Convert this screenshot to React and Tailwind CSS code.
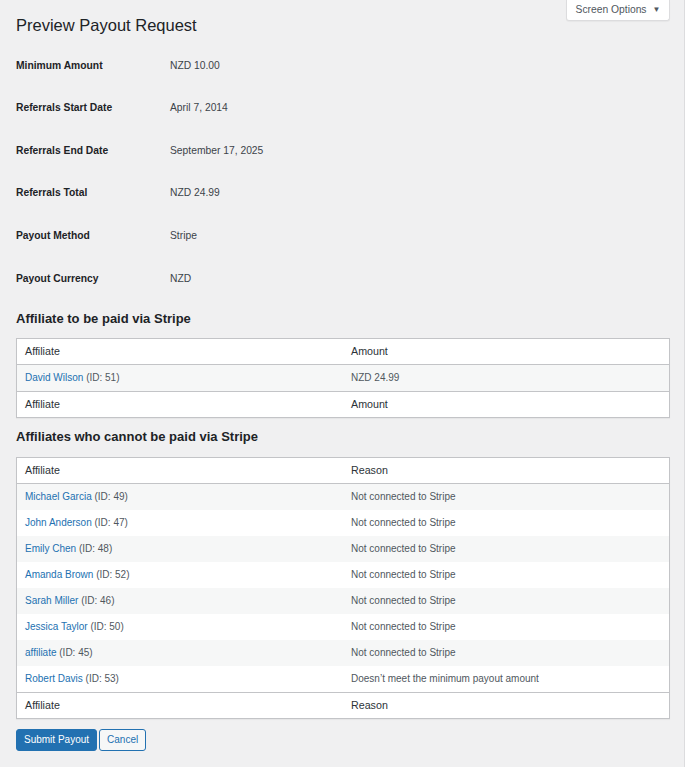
import React from 'react';

const summary = [
  { label: 'Minimum Amount', value: 'NZD 10.00' },
  { label: 'Referrals Start Date', value: 'April 7, 2014' },
  { label: 'Referrals End Date', value: 'September 17, 2025' },
  { label: 'Referrals Total', value: 'NZD 24.99' },
  { label: 'Payout Method', value: 'Stripe' },
  { label: 'Payout Currency', value: 'NZD' },
];

const payable = [{ name: 'David Wilson', id: 51, amount: 'NZD 24.99' }];

const unpayable = [
  { name: 'Michael Garcia', id: 49, reason: 'Not connected to Stripe' },
  { name: 'John Anderson', id: 47, reason: 'Not connected to Stripe' },
  { name: 'Emily Chen', id: 48, reason: 'Not connected to Stripe' },
  { name: 'Amanda Brown', id: 52, reason: 'Not connected to Stripe' },
  { name: 'Sarah Miller', id: 46, reason: 'Not connected to Stripe' },
  { name: 'Jessica Taylor', id: 50, reason: 'Not connected to Stripe' },
  { name: 'affiliate', id: 45, reason: 'Not connected to Stripe' },
  { name: 'Robert Davis', id: 53, reason: 'Doesn\u2019t meet the minimum payout amount' },
];

const HeadRow = ({ cols, top }) => (
  <div
    className={`grid grid-cols-2 h-[26px] items-center text-[10.7px] text-[#2c3338] bg-white ${
      top ? 'border-b' : 'border-t'
    } border-[#c3c4c7]`}
  >
    {cols.map((c) => (
      <div key={c} className="px-2">{c}</div>
    ))}
  </div>
);

const AffiliateTable = ({ cols, rows }) => (
  <div className="border border-[#c3c4c7] bg-white shadow-[0_1px_1px_rgba(0,0,0,0.04)]">
    <HeadRow cols={cols} top />
    {rows.map((r, i) => (
      <div
        key={r.id}
        className={`grid grid-cols-2 h-[26px] items-center text-[10px] text-[#50575e] ${
          i % 2 === 0 ? 'bg-[#f6f7f7]' : 'bg-white'
        }`}
      >
        <div className="px-2">
          <a href="#" className="text-[#2271b1]">{r.name}</a> (ID: {r.id})
        </div>
        <div className="px-2">{r.amount || r.reason}</div>
      </div>
    ))}
    <HeadRow cols={cols} />
  </div>
);

export default function App() {
  return (
    <div
      className="min-h-screen bg-[#f0f0f1] border-r border-[#dcdcde] text-[#3c434a]"
      style={{ fontFamily: '"Liberation Sans", Arial, sans-serif' }}
    >
      <div className="pl-4 pr-[14px]">
        <div className="flex items-start justify-between">
          <h1 className="pt-[14px] text-[16.5px] leading-[22px] text-[#1d2327]">Preview Payout Request</h1>
          <button className="h-[21px] w-[104px] bg-white border border-[#dcdcde] border-t-0 rounded-b-[3px] text-[10.3px] text-[#50575e] flex items-center justify-center gap-[6px] shadow-[0_1px_1px_rgba(0,0,0,0.04)]">
            Screen Options <span className="text-[8px]">▼</span>
          </button>
        </div>

        <div className="mt-[8px]">
          {summary.map((s) => (
            <div key={s.label} className="flex items-center h-[42.6px] text-[10.3px]">
              <div className="w-[154px] font-bold text-[#1d2327]">{s.label}</div>
              <div className="text-[#3c434a]">{s.value}</div>
            </div>
          ))}
        </div>

        <h2 className="mt-[10px] text-[13px] leading-[18px] font-bold text-[#1d2327]">
          Affiliate to be paid via Stripe
        </h2>
        <div className="mt-[10px]">
          <AffiliateTable cols={['Affiliate', 'Amount']} rows={payable} />
        </div>

        <h2 className="mt-[10px] text-[13px] leading-[18px] font-bold text-[#1d2327]">
          Affiliates who cannot be paid via Stripe
        </h2>
        <div className="mt-[11px]">
          <AffiliateTable cols={['Affiliate', 'Reason']} rows={unpayable} />
        </div>

        <div className="mt-[10px] flex gap-[2px]">
          <button className="h-[22px] px-[7px] rounded-[3px] bg-[#2271b1] border border-[#2271b1] text-white text-[10px]">
            Submit Payout
          </button>
          <button className="h-[22px] px-[7px] rounded-[3px] bg-[#f6f7f7] border border-[#2271b1] text-[#2271b1] text-[10px]">
            Cancel
          </button>
        </div>
      </div>
    </div>
  );
}
